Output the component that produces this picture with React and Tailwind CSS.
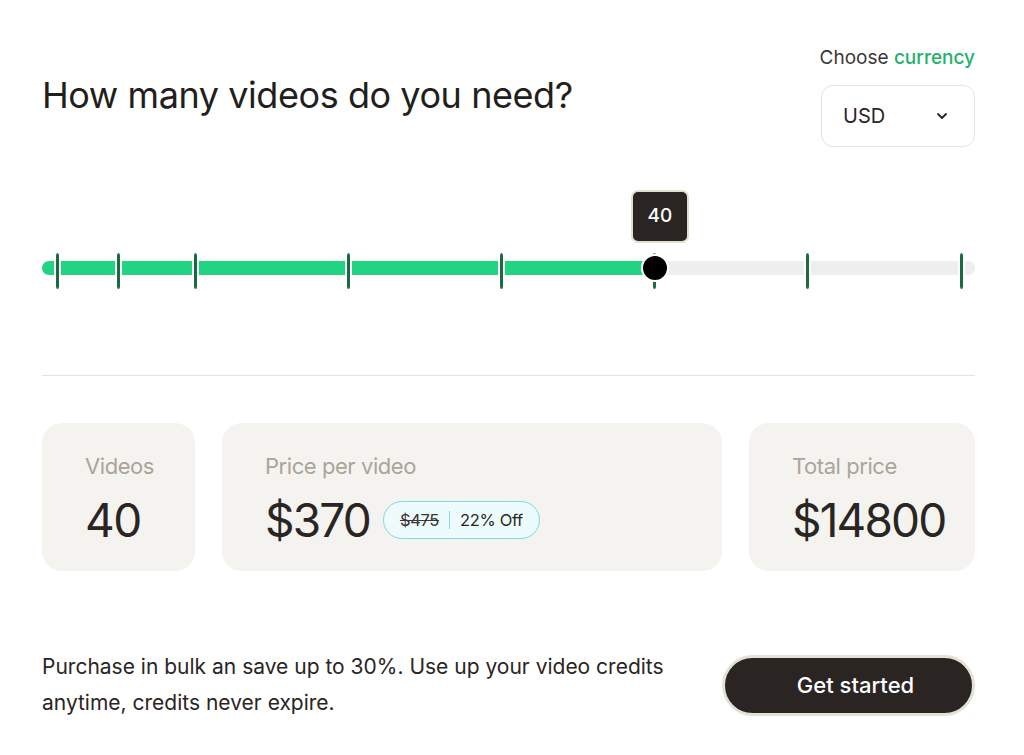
import { ChevronDown } from 'lucide-react';

const TICKS = [1, 5, 10, 20, 30, 40, 50, 60];
const MIN = 1;
const MAX = 60;
const VALUE = 40;

// px offset inside the 933px slider box
const pos = (v) => 15.7 + ((v - MIN) / (MAX - MIN)) * 903.3;

const Slider = () => {
    const x = pos(VALUE);
    return (
        <div className="relative h-[100px] mt-[43px]">
            <div
                className="absolute top-0 w-[58px] h-[53px] rounded-[7px] bg-[#2a2523] border-2 border-[#e3dfcf] flex items-center justify-center text-white text-[19px] font-medium"
                style={{ left: x - 24 }}
            >
                40
            </div>
            <div className="absolute top-[71px] left-0 right-0 h-[14px] rounded-full bg-[#eeeeee]" />
            <div className="absolute top-[71px] left-0 h-[14px] rounded-l-full bg-[#22d384]" style={{ width: x }} />
            {TICKS.map((t) => (
                <div
                    key={t}
                    className="absolute top-[63px] h-[36px] w-[7px] -ml-[3.5px] rounded-full bg-[#1c6b40] border-x-2 border-white"
                    style={{ left: pos(t) }}
                />
            ))}
            <div
                className="absolute top-[64px] w-[28px] h-[28px] -ml-[14px] rounded-full bg-black border-2 border-white"
                style={{ left: x }}
            />
        </div>
    );
};

const Card = ({ label, className, children }) => (
    <div className={`bg-[#f5f3ef] rounded-[20px] h-[148px] pl-[43px] pt-[31px] ${className}`}>
        <div className="text-[22px] text-[#a9a59b] tracking-[-0.02em] leading-[24px]">{label}</div>
        <div className="mt-[16px] flex items-center">{children}</div>
    </div>
);

export default function App() {
    return (
        <div className="w-[1024px] h-[755px] bg-white pl-[42px] pr-[49px] pt-[46px] text-[#2a2523]" style={{ fontFamily: 'Inter, "Noto Sans", sans-serif' }}>
            <div className="flex justify-between items-start">
                <h1 className="mt-[31px] text-[36px] leading-[36px] tracking-[-0.012em] font-normal text-[#221e1c]">How many videos do you need?</h1>
                <div className="flex flex-col items-end">
                    <div className="text-[19px] leading-[24px] tracking-[0em] text-[#3b3735]">
                        Choose <span className="text-[#23b26c] font-medium">currency</span>
                    </div>
                    <button className="mt-[15px] w-[154px] h-[62px] rounded-xl border border-[#e3e3e3] bg-white flex items-center justify-between pl-[21px] pr-[24px] text-[20px]">
                        <span>USD</span>
                        <ChevronDown size={16} strokeWidth={2.75} />
                    </button>
                </div>
            </div>

            <Slider />

            <div className="mt-[85px] border-t border-[#e4e4e4]" />

            <div className="mt-[47px] flex gap-[27px]">
                <Card label="Videos" className="w-[153px]">
                    <span className="text-[46px] leading-[52px] tracking-[-0.03em]">40</span>
                </Card>
                <Card label="Price per video" className="w-[500px]">
                    <span className="text-[46px] leading-[52px] tracking-[-0.04em]">$370</span>
                    <div className="ml-[13px] h-[38px] px-[16px] rounded-full border border-[#7fd8ea] bg-[#edfbfd] flex items-center text-[16.5px] tracking-[-0.02em]">
                        <span className="line-through text-[#3a3634]">$475</span>
                        <span className="mx-[10px] w-px h-[18px] bg-[#8fd6e3]" />
                        <span>22% Off</span>
                    </div>
                </Card>
                <Card label="Total price" className="flex-1">
                    <span className="text-[46px] leading-[52px] tracking-[-0.04em]">$14800</span>
                </Card>
            </div>

            <div className="mt-[78px] flex items-center justify-between">
                <p className="w-[660px] text-[21px] leading-[36px]">
                    Purchase in bulk an save up to 30%. Use up your video credits anytime, credits never expire.
                </p>
                <button className="w-[253px] h-[61px] rounded-full bg-[#2a2523] border-[3px] border-[#e4e2d6] pl-[14px] text-white text-[22px] font-medium">
                    Get started
                </button>
            </div>
        </div>
    );
}
